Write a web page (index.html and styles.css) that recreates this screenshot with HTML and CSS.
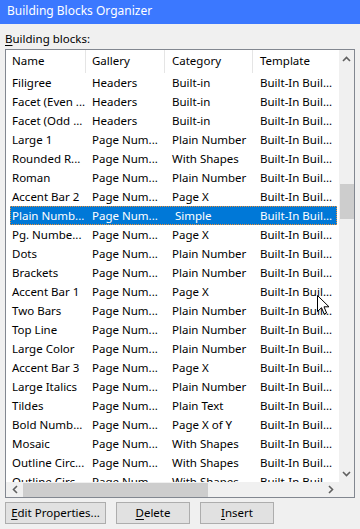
FILE: index.html
```html
<!DOCTYPE html>
<html lang="en">
<head>
    <meta charset="UTF-8">
    <title>Building Blocks Organizer</title>
    <link rel="stylesheet" href="styles.css">
</head>
<body>
    <div class="bbo_title">Building Blocks Organizer</div>

    <div class="bbo_body">
        <div class="bbo_label"><u>B</u>uilding blocks:</div>

        <div class="bbo_list">
            <div class="bbo_view">
                <div class="bbo_head">
                    <span>Name</span><span>Gallery</span><span>Category</span><span>Template</span>
                </div>
                <div class="bbo_rows">
                    <div class="bbo_row"><span>Filigree</span><span>Headers</span><span>Built-in</span><span>Built-In Buil...</span></div>
                    <div class="bbo_row"><span>Facet (Even ...</span><span>Headers</span><span>Built-in</span><span>Built-In Buil...</span></div>
                    <div class="bbo_row"><span>Facet (Odd ...</span><span>Headers</span><span>Built-in</span><span>Built-In Buil...</span></div>
                    <div class="bbo_row"><span>Large 1</span><span>Page Num...</span><span>Plain Number</span><span>Built-In Buil...</span></div>
                    <div class="bbo_row"><span>Rounded R...</span><span>Page Num...</span><span>With Shapes</span><span>Built-In Buil...</span></div>
                    <div class="bbo_row"><span>Roman</span><span>Page Num...</span><span>Plain Number</span><span>Built-In Buil...</span></div>
                    <div class="bbo_row"><span>Accent Bar 2</span><span>Page Num...</span><span>Page X</span><span>Built-In Buil...</span></div>
                    <div class="bbo_row bbo_row-selected"><span>Plain Numb...</span><span>Page Num...</span><span> Simple</span><span>Built-In Buil...</span></div>
                    <div class="bbo_row"><span>Pg. Numbe...</span><span>Page Num...</span><span>Page X</span><span>Built-In Buil...</span></div>
                    <div class="bbo_row"><span>Dots</span><span>Page Num...</span><span>Plain Number</span><span>Built-In Buil...</span></div>
                    <div class="bbo_row"><span>Brackets</span><span>Page Num...</span><span>Plain Number</span><span>Built-In Buil...</span></div>
                    <div class="bbo_row"><span>Accent Bar 1</span><span>Page Num...</span><span>Page X</span><span>Built-In Buil...</span></div>
                    <div class="bbo_row"><span>Two Bars</span><span>Page Num...</span><span>Plain Number</span><span>Built-In Buil...</span></div>
                    <div class="bbo_row"><span>Top Line</span><span>Page Num...</span><span>Plain Number</span><span>Built-In Buil...</span></div>
                    <div class="bbo_row"><span>Large Color</span><span>Page Num...</span><span>Plain Number</span><span>Built-In Buil...</span></div>
                    <div class="bbo_row"><span>Accent Bar 3</span><span>Page Num...</span><span>Page X</span><span>Built-In Buil...</span></div>
                    <div class="bbo_row"><span>Large Italics</span><span>Page Num...</span><span>Plain Number</span><span>Built-In Buil...</span></div>
                    <div class="bbo_row"><span>Tildes</span><span>Page Num...</span><span>Plain Text</span><span>Built-In Buil...</span></div>
                    <div class="bbo_row"><span>Bold Numb...</span><span>Page Num...</span><span>Page X of Y</span><span>Built-In Buil...</span></div>
                    <div class="bbo_row"><span>Mosaic</span><span>Page Num...</span><span>With Shapes</span><span>Built-In Buil...</span></div>
                    <div class="bbo_row"><span>Outline Circ...</span><span>Page Num...</span><span>With Shapes</span><span>Built-In Buil...</span></div>
                    <div class="bbo_row"><span>Outline Circ...</span><span>Page Num...</span><span>With Shapes</span><span>Built-In Buil...</span></div>
                </div>
            </div>

            <div class="bbo_vscroll">
                <div class="bbo_arrow"><svg width="9" height="6" viewBox="0 0 9 6"><path d="M1 5 L4.5 1.5 L8 5" fill="none" stroke="#606060" stroke-width="1.6"/></svg></div>
                <div class="bbo_vtrack"><div class="bbo_vthumb"></div></div>
                <div class="bbo_arrow"><svg width="9" height="6" viewBox="0 0 9 6"><path d="M1 1 L4.5 4.5 L8 1" fill="none" stroke="#606060" stroke-width="1.6"/></svg></div>
            </div>

            <div class="bbo_hscroll">
                <div class="bbo_arrow"><svg width="6" height="9" viewBox="0 0 6 9"><path d="M5 1 L1.5 4.5 L5 8" fill="none" stroke="#606060" stroke-width="1.6"/></svg></div>
                <div class="bbo_htrack"><div class="bbo_hthumb"></div></div>
                <div class="bbo_arrow"><svg width="6" height="9" viewBox="0 0 6 9"><path d="M1 1 L4.5 4.5 L1 8" fill="none" stroke="#606060" stroke-width="1.6"/></svg></div>
            </div>
            <div class="bbo_corner"></div>
        </div>

        <div class="bbo_buttons">
            <button class="bbo_btn bbo_btn-wide"><u>E</u>dit Properties...</button>
            <button class="bbo_btn"><u>D</u>elete</button>
            <button class="bbo_btn"><u>I</u>nsert</button>
        </div>
    </div>

    <svg class="bbo_cursor" width="13" height="21" viewBox="0 0 13 21"><path d="M0.5 0.5 L0.5 16.5 L4.5 12.7 L7.2 19 L9.6 18 L7 11.8 L12 11.8 Z" fill="#fff" stroke="#000" stroke-width="1" stroke-linejoin="miter"/></svg>
</body>
</html>
```

FILE: styles.css
```css
html,body{ margin: 0; padding: 0;}
body{ position: relative; width: 360px; height: 529px; overflow: hidden; background: #f0f0f0; color: #000; font: 11.5px/16px "Segoe UI","Noto Sans","Liberation Sans",sans-serif;}
u{ text-decoration: underline; text-underline-offset: 2px;}

.bbo_title{ height: 24px; line-height: 21px; padding-left: 7px; background: #3b78ff; color: #fff; font-size: 12px;}

.bbo_body{ padding: 0 5px;}
.bbo_label{ box-sizing: border-box; height: 25px; padding-top: 7px;}

/* list view with both scrollbars */
.bbo_list{ box-sizing: border-box; width: 350px; height: 449px; border: 1px solid #828790; background: #fff; display: grid; grid-template-columns: 333px 15px; grid-template-rows: 432px 15px;}
.bbo_view{ overflow: hidden; white-space: nowrap;}

.bbo_head{ display: grid; grid-template-columns: 80px 79px 88px 1fr; height: 23px; line-height: 22px;}
.bbo_head span{ padding-left: 6px; border-right: 1px solid #e5e5e5;}
.bbo_head span:nth-child(n+3){ padding-left: 7px;}
.bbo_head span:last-child{ border-right: 0;}

.bbo_rows{ padding: 0 2px 0 4px;}
.bbo_row{ box-sizing: border-box; display: grid; grid-template-columns: 80px 80px 88px 1fr; height: 19px; line-height: 18px; border: 1px solid transparent;}
.bbo_row span{ padding-left: 1px; white-space: pre; overflow: hidden;}
.bbo_row-selected{ background: #0078d7; color: #fff; border: 1px dotted #e8903a;}

.bbo_arrow{ display: flex; align-items: center; justify-content: center; width: 15px; height: 15px;}
.bbo_vscroll{ display: flex; flex-direction: column; background: #f0f0f0;}
.bbo_vscroll .bbo_arrow{ height: 17px;}
.bbo_vtrack{ flex: 1; padding-top: 117px;}
.bbo_vthumb{ height: 35px; margin-left: 1px; background: #cdcdcd;}

.bbo_hscroll{ display: flex; background: #f0f0f0;}
.bbo_hscroll .bbo_arrow{ width: 17px;}
.bbo_htrack{ flex: 1;}
.bbo_hthumb{ width: 185px; height: 14px; margin-top: 1px; background: #cdcdcd;}
.bbo_corner{ background: #f0f0f0;}

.bbo_buttons{ display: flex; gap: 10px; margin-top: 4px;}
.bbo_btn{ box-sizing: border-box; width: 74px; height: 22px; padding: 0; border: 1px solid #adadad; background: #e1e1e1; color: #000; font: inherit; line-height: 18px;}
.bbo_btn-wide{ width: 101px;}

.bbo_cursor{ position: absolute; left: 317px; top: 295px;}
```
